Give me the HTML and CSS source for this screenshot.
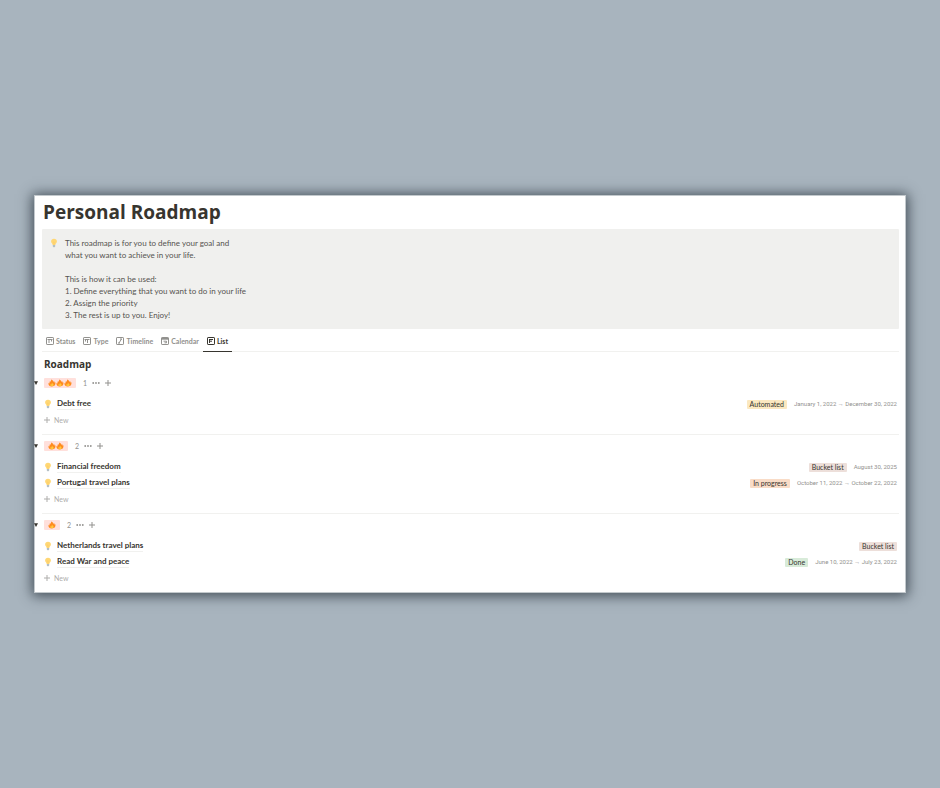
FILE: index.html
```html
<!DOCTYPE html>
<html lang="en">
    <head>
        <meta charset="UTF-8">
        <meta name="viewport" content="width=device-width, initial-scale=1.0">
        <title>Personal Roadmap</title>
        <link rel="stylesheet" href="styles.css">
    </head>
    <body>
        <!-- shared icons -->
        <svg class="sprite" aria-hidden="true">
            <symbol id="bulb" viewBox="0 0 8 10">
                <path d="M4 .8a2.900 2.900 0 0 0-2.900 2.800c0 1.500 1.500 2 1.600 3.300h2.600c.1-1.300 1.600-1.800 1.600-3.300A2.900 2.900 0 0 0 4 .8z" fill="#ffd775"/>
                <path d="M3.200 3.800 4 4.600l.8-.8M4 4.600v2" fill="none" stroke="#f8c65f" stroke-width=".5"/>
                <path d="M2.800 6.900h2.400v1.500L4.500 9.200h-1l-.7-.8z" fill="#b3bfc5"/>
            </symbol>
            <symbol id="fire" viewBox="0 0 8 8">
                <path d="M3.200.6C4.600 1 5.300 1.900 5.300 3c.4-.2.600-.6.600-1 .5.4.8 1 .8 1.700.3-.1.500-.4.600-.7C8 5.600 6.600 7.400 4 7.400S0 5.800.5 3.700c.3.400.6.600 1 .7-.1-1 .1-1.700.6-2.300.1.400.3.700.7.900C2.600 2.300 3.300 1.600 3.200.6z" fill="#ff8b1f"/>
                <path d="M4.200 3.800c.2 1 1.400 1.200 1.400 2.200 0 .8-.7 1.200-1.600 1.200s-1.700-.4-1.700-1.200c0-.5.300-.9.600-1.100.1.300.3.500.6.500.1-.6.200-1.200.7-1.600z" fill="#ffc83d"/>
            </symbol>
            <symbol id="plus" viewBox="0 0 8 8">
                <path d="M4 1v6M1 4h6" fill="none" stroke="currentColor"/>
            </symbol>
            <symbol id="dots" viewBox="0 0 8 8">
                <circle cx="1.200" cy="4" r=".9"/><circle cx="4" cy="4" r=".9"/><circle cx="6.800" cy="4" r=".9"/>
            </symbol>
            <symbol id="arrow" viewBox="0 0 4 4">
                <path d="M0 .2h4L2 4z"/>
            </symbol>
        </svg>

        <main class="page">
            <h1>Personal Roadmap</h1>

            <section class="callout">
                <svg class="bulb"><use href="#bulb"/></svg>
                <div>
                    <p>This roadmap is for you to define your goal and<br>what you want to achieve in your life.</p>
                    <p>This is how it can be used:<br>1. Define everything that you want to do in your life<br>2. Assign the priority<br>3. The rest is up to you. Enjoy!</p>
                </div>
            </section>

            <nav class="tabs">
                <button class="tab" type="button">
                    <svg viewBox="0 0 8 8"><rect x=".5" y=".5" width="7" height="7" rx=".6"/><path d="M1.500 2.500h5M3 2.500v3.500M5.500 2.500v2"/></svg>
                    Status
                </button>
                <button class="tab" type="button">
                    <svg viewBox="0 0 8 8"><rect x=".5" y=".5" width="7" height="7" rx=".6"/><path d="M1.500 2.500h5M2.500 2.500v2M4.500 2.500v3.500"/></svg>
                    Type
                </button>
                <button class="tab" type="button">
                    <svg viewBox="0 0 8 8"><rect x=".5" y=".5" width="7" height="7" rx=".6"/><path d="M4 2h2M2 6h2M5.500 2 3 6"/></svg>
                    Timeline
                </button>
                <button class="tab" type="button">
                    <svg viewBox="0 0 8 8"><rect x=".5" y=".5" width="7" height="7" rx=".6"/><path d="M.5 1.500h7M.5 2.200h7M2.500 4.200h3v1.600h-2"/></svg>
                    Calendar
                </button>
                <button class="tab active" type="button">
                    <svg viewBox="0 0 8 8"><rect x=".5" y=".5" width="7" height="7" rx=".6"/><path d="M2 2.500h4M2 4.200h3M2.500 2.500v3.500"/></svg>
                    List
                </button>
            </nav>

            <h2>Roadmap</h2>

            <section class="group">
                <header class="group-header">
                    <button class="toggle" type="button" aria-label="Collapse group"><svg><use href="#arrow"/></svg></button>
                    <span class="priority"><svg><use href="#fire"/></svg><svg><use href="#fire"/></svg><svg><use href="#fire"/></svg></span>
                    <span class="count">1</span>
                    <button class="icon-btn" type="button" aria-label="Group options"><svg><use href="#dots"/></svg></button>
                    <button class="icon-btn" type="button" aria-label="Add to group"><svg><use href="#plus"/></svg></button>
                </header>
                <div class="row">
                    <svg class="bulb"><use href="#bulb"/></svg>
                    <a class="name" href="#">Debt free</a>
                    <span class="tag yellow">Automated</span>
                    <span class="date">January 1, 2022 → December 30, 2022</span>
                </div>
                <button class="new" type="button"><svg><use href="#plus"/></svg>New</button>
            </section>

            <section class="group">
                <header class="group-header">
                    <button class="toggle" type="button" aria-label="Collapse group"><svg><use href="#arrow"/></svg></button>
                    <span class="priority"><svg><use href="#fire"/></svg><svg><use href="#fire"/></svg></span>
                    <span class="count">2</span>
                    <button class="icon-btn" type="button" aria-label="Group options"><svg><use href="#dots"/></svg></button>
                    <button class="icon-btn" type="button" aria-label="Add to group"><svg><use href="#plus"/></svg></button>
                </header>
                <div class="row">
                    <svg class="bulb"><use href="#bulb"/></svg>
                    <a class="name" href="#">Financial freedom</a>
                    <span class="tag brown">Bucket list</span>
                    <span class="date">August 30, 2025</span>
                </div>
                <div class="row">
                    <svg class="bulb"><use href="#bulb"/></svg>
                    <a class="name" href="#">Portugal travel plans</a>
                    <span class="tag orange">In progress</span>
                    <span class="date">October 11, 2022 → October 22, 2022</span>
                </div>
                <button class="new" type="button"><svg><use href="#plus"/></svg>New</button>
            </section>

            <section class="group">
                <header class="group-header">
                    <button class="toggle" type="button" aria-label="Collapse group"><svg><use href="#arrow"/></svg></button>
                    <span class="priority"><svg><use href="#fire"/></svg></span>
                    <span class="count">2</span>
                    <button class="icon-btn" type="button" aria-label="Group options"><svg><use href="#dots"/></svg></button>
                    <button class="icon-btn" type="button" aria-label="Add to group"><svg><use href="#plus"/></svg></button>
                </header>
                <div class="row">
                    <svg class="bulb"><use href="#bulb"/></svg>
                    <a class="name" href="#">Netherlands travel plans</a>
                    <span class="tag brown">Bucket list</span>
                </div>
                <div class="row">
                    <svg class="bulb"><use href="#bulb"/></svg>
                    <a class="name" href="#">Read War and peace</a>
                    <span class="tag green">Done</span>
                    <span class="date">June 10, 2022 → July 23, 2022</span>
                </div>
                <button class="new" type="button"><svg><use href="#plus"/></svg>New</button>
            </section>
        </main>
    </body>
</html>
```

FILE: styles.css
```css
* {
    box-sizing: border-box;
}

body {
    font-family: Lato, "Open Sans", sans-serif;
    font-size: 7px;
    line-height: 12px;
    color: #37352f;
    background-color: #a8b4be;
    display: flex;
    flex-direction: column;
    justify-content: center;
    min-height: 100vh;
    margin: 0;
    padding: 0 34px;
}

h1, h2, p {
    margin: 0;
}

h1, h2 {
    font-family: "Open Sans", "Noto Sans", sans-serif;
}

button {
    font: inherit;
    color: inherit;
    background: none;
    border: none;
    padding: 0;
    cursor: pointer;
}

svg {
    display: block;
    flex: none;
    width: 8px;
    height: 8px;
    fill: currentColor;
}

.sprite {
    position: absolute;
    width: 0;
    height: 0;
}

.page {
    background-color: #fff;
    border: 1px solid #c3c9cd;
    padding: 2px 6px 6px 7px;
    box-shadow: 0 1px 12px 2px rgba(35, 45, 55, 0.75);
}

h1 {
    font-size: 19px;
    line-height: 28px;
    font-weight: 700;
    padding-left: 1px;
    margin-bottom: 3px;
}

.bulb {
    height: 10px;
}

.callout {
    display: flex;
    gap: 7px;
    padding: 8px;
    background-color: #f0f0ee;
    border-radius: 1px;
    font-size: 8px;
    color: #55534e;
}

.callout .bulb {
    margin-top: 1px;
}

.callout p + p {
    margin-top: 12px;
}

.tabs {
    display: flex;
    height: 22px;
    margin-top: 1px;
    border-bottom: 1px solid #f1f1ef;
}

.tab {
    display: flex;
    align-items: center;
    gap: 2px;
    height: 22px;
    padding: 0 4px;
    font-weight: 700;
    color: #92918e;
}

.tab svg {
    fill: none;
    stroke: currentColor;
}

.tab.active {
    color: #37352f;
    box-shadow: inset 0 -1px #37352f;
}

h2 {
    font-size: 10px;
    line-height: 16px;
    font-weight: 700;
    padding-left: 2px;
    margin: 4px 0 3px;
}

.group + .group {
    border-top: 1px solid #f1f1ef;
    margin-top: 6px;
    padding-top: 3px;
}

.group-header {
    display: flex;
    align-items: center;
    height: 16px;
    margin: 0 0 5px -9px;
    color: #92918e;
}

.toggle {
    width: 11px;
    padding-left: 1px;
    color: #37352f;
}

.toggle svg {
    width: 4px;
    height: 4px;
}

.priority {
    display: flex;
    padding: 1px 4px;
    background-color: #ffe0dc;
    border-radius: 1px;
}

.count {
    margin: 0 5px 0 7px;
}

.icon-btn {
    margin-right: 4px;
}

.row {
    display: flex;
    align-items: center;
    height: 16px;
    padding: 0 2px;
}

.name {
    margin: 0 auto 0 5px;
    font-size: 8px;
    line-height: 11px;
    font-weight: 700;
    color: inherit;
    text-decoration: none;
    border-bottom: 1px solid #f1f1ef;
}

.tag {
    padding: 0 3px;
    line-height: 9px;
    border-radius: 1px;
}

.yellow {
    background-color: #fbe8c0;
}

.brown {
    background-color: #eddfda;
}

.orange {
    background-color: #f9dcc7;
}

.green {
    background-color: #d8ebd9;
}

.date {
    margin-left: 7px;
    font-family: Roboto, "Open Sans", sans-serif;
    font-size: 6px;
    color: #92918e;
}

.new {
    display: flex;
    align-items: center;
    gap: 3px;
    height: 16px;
    padding-left: 1px;
    color: #aeadab;
}
```
